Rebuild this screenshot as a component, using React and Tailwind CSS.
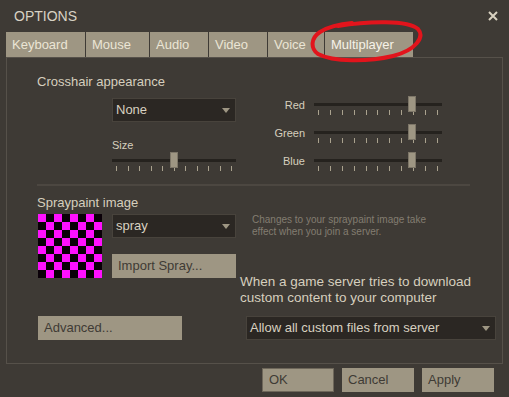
import React from "react";

const tabs = [
  { name: "Keyboard", w: "w-[79px]" },
  { name: "Mouse", w: "w-[63px]" },
  { name: "Audio", w: "w-[58px]" },
  { name: "Video", w: "w-[58px]" },
  { name: "Voice", w: "w-[56px]" },
  { name: "Multiplayer", w: "w-[88px]" },
];

const Arrow = () => (
  <svg width="8" height="5" viewBox="0 0 8 5" className="shrink-0">
    <path d="M0 0 H8 L4 5 Z" fill="#9e9683" />
  </svg>
);

const Dropdown = ({ label, className }) => (
  <div
    className={
      "h-[24px] bg-[#2b2723] border border-[#48433c] flex items-center justify-between pl-[3px] pr-[5px] text-[13px] text-[#d8d1c0] " +
      className
    }
  >
    <span>{label}</span>
    <Arrow />
  </div>
);

const Slider = ({ wide, thumb }) => {
  const ticks = Array.from({ length: 11 });
  return (
    <div className={"relative h-[20px] " + (wide ? "w-[128px]" : "w-[124px]")}>
      <div className="absolute left-0 right-0 top-[7px] h-[3px] bg-[#25221e]" />
      <div className="absolute top-[14px] left-0 right-0 flex justify-between px-[4px]">
        {ticks.map((_, i) => (
          <div key={i} className="w-[1px] h-[5px] bg-[#aaa28e]" />
        ))}
      </div>
      <div
        className="absolute top-0 w-[8px] h-[16px] bg-[#9e9683] border border-[#7d7668]"
        style={{ left: thumb }}
      />
    </div>
  );
};

const Button = ({ children, className }) => (
  <button
    className={
      "h-[24px] bg-[#9e9683] text-left pl-[6px] text-[13px] text-[#3f3b35] " +
      className
    }
  >
    {children}
  </button>
);

const Checker = () => {
  const cells = [];
  for (let r = 0; r < 8; r++) {
    for (let c = 0; c < 8; c++) {
      cells.push(
        <div
          key={r + "-" + c}
          className={(r + c) % 2 === 0 ? "bg-[#ff10ff]" : "bg-[#0a0008]"}
        />
      );
    }
  }
  return (
    <div className="w-[64px] h-[64px] grid grid-cols-8 grid-rows-8 ml-[1px] blur-[0.4px]">
      {cells}
    </div>
  );
};

export default function App() {
  return (
    <div className="relative w-[509px] h-[397px] overflow-hidden bg-[#3e3a35] font-['Liberation_Sans',Arial,sans-serif] text-[#d6cfbe]">
      <div className="h-[32px] flex items-center justify-between pl-[14px] pr-[11px]">
        <span className="text-[14px] text-[#d8d2c4]">OPTIONS</span>
        <svg width="10" height="10" viewBox="0 0 10 10">
          <path d="M1 1 L9 9 M9 1 L1 9" stroke="#d8d1c0" strokeWidth="2" />
        </svg>
      </div>

      <div className="flex gap-[1px] pl-[6px] h-[25px]">
        {tabs.map((t) => (
          <div
            key={t.name}
            className={
              t.w +
              " bg-[#9e9683] flex items-center pl-[6px] text-[13px] " +
              (t.name === "Multiplayer" ? "text-[#f6f2e8]" : "text-[#ebe5d5]")
            }
          >
            {t.name}
          </div>
        ))}
      </div>

      <div className="ml-[6px] w-[497px] h-[307px] border border-[#56514a]">
        <div className="h-[126px] flex pl-[30px]">
          <div className="w-[198px] flex flex-col">
            <div className="mt-[16px] text-[13px] leading-[16px]">
              Crosshair appearance
            </div>
            <Dropdown label="None" className="mt-[8px] ml-[75px] w-[124px]" />
            <div className="mt-[17px] ml-[75px] text-[11px] leading-[12px]">
              Size
            </div>
            <div className="mt-[1px] ml-[75px]">
              <Slider thumb={58} />
            </div>
          </div>
          <div className="ml-[25px] mt-[38px] flex flex-col gap-[8px]">
            {["Red", "Green", "Blue"].map((c) => (
              <div key={c} className="flex items-start h-[20px]">
                <div className="w-[45px] text-right text-[11px] leading-[18px]">
                  {c}
                </div>
                <div className="ml-[9px]">
                  <Slider wide thumb={94} />
                </div>
              </div>
            ))}
          </div>
        </div>

        <div className="ml-[30px] w-[433px] h-[2px] bg-[#4c4741]" />

        <div className="pl-[30px]">
          <div className="mt-[9px] text-[13px] leading-[16px]">
            Spraypaint image
          </div>
          <div className="mt-[3px] flex">
            <div className="w-[199px] flex flex-col">
              <div className="flex">
                <Checker />
                <div className="ml-[10px] w-[124px] flex flex-col">
                  <Dropdown label="spray" className="w-[124px]" />
                  <Button className="mt-[16px] w-[124px]">Import Spray...</Button>
                </div>
              </div>
              <Button className="mt-[38px] ml-[1px] w-[144px]">Advanced...</Button>
            </div>
            <div className="ml-[4px] flex flex-col">
              <div className="pl-[12px] text-[10px] leading-[12px] text-[#837d71]">
                Changes to your spraypaint image take
                <br />
                effect when you join a server.
              </div>
              <div className="mt-[36px] text-[13.5px] leading-[16px]">
                When a game server tries to download
                <br />
                custom content to your computer
              </div>
              <Dropdown
                label="Allow all custom files from server"
                className="mt-[10px] ml-[6px] w-[250px]"
              />
            </div>
          </div>
        </div>
      </div>

      <div className="mt-[4px] flex justify-end gap-[8px] pr-[15px]">
        <Button className="w-[72px] border border-[#6e675a]">OK</Button>
        <Button className="w-[72px]">Cancel</Button>
        <Button className="w-[72px]">Apply</Button>
      </div>

      <svg
        className="absolute left-[308px] top-[20px]"
        width="118"
        height="44"
        viewBox="0 0 118 44"
      >
        <path
          d="M30 6 C60 1 100 0 110 9 C117 17 108 30 85 36 C60 42 25 42 10 34 C2 28 3 18 12 12 C20 7 32 4 44 3"
          fill="none"
          stroke="#e2141c"
          strokeWidth="4"
          strokeLinecap="round"
        />
      </svg>
    </div>
  );
}
